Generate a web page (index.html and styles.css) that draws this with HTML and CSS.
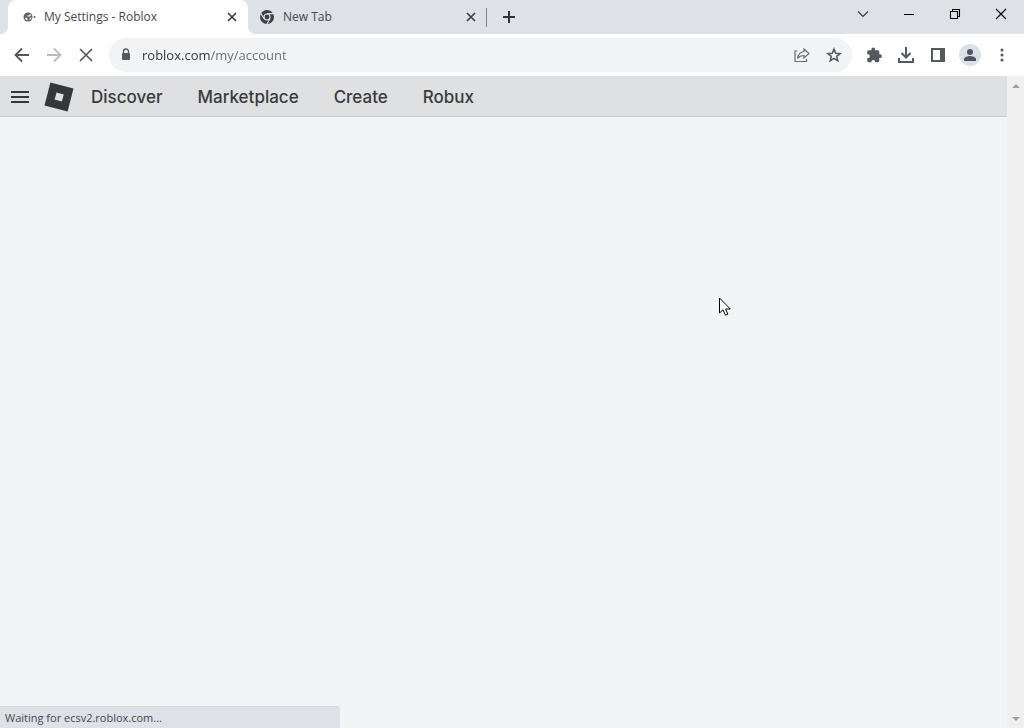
FILE: index.html
```html
<!DOCTYPE html>
<html lang="en">
  <head>
    <meta charset="utf-8">
    <title>My Settings - Roblox</title>
    <link rel="stylesheet" href="styles.css">
  </head>
<body>

<div class="tabstrip">
  <div class="tab active">
    <svg class="favicon" viewBox="0 0 16 16" width="16" height="16">
      <circle cx="6" cy="8" r="4.500" fill="#5f6368"/>
      <path d="M3 8.500l2.500 1v2C4 11 3 10 3 8.500zM5 6.500h2L8 5l1 1.500-1 1H5.500zM7.500 9.500L9.500 8c0 1.500-.8 2.500-2 3z" fill="#fff"/>
      <circle cx="12.500" cy="8" r="1" fill="#5f6368"/>
    </svg>
    <span class="tab-title">My Settings - Roblox</span>
    <button class="tab-close" aria-label="Close tab">
      <svg viewBox="0 0 16 16" width="16" height="16"><path d="M4 4l8 8M12 4l-8 8" stroke="#3c4043" stroke-width="1.7"/></svg>
    </button>
  </div>
  <div class="tab">
    <svg class="favicon" viewBox="0 0 16 16" width="16" height="16">
      <circle cx="8" cy="8" r="7" fill="#3c4043"/>
      <circle cx="8" cy="8" r="3.6" fill="#dee1e6"/>
      <circle cx="8" cy="8" r="2.4" fill="#3c4043"/>
      <path d="M8 4.6h6.6M5 9.8L1.8 4.2M11 9.7l-3.2 5.6" stroke="#dee1e6" stroke-width="1.1"/>
    </svg>
    <span class="tab-title">New Tab</span>
    <button class="tab-close" aria-label="Close tab">
      <svg viewBox="0 0 16 16" width="16" height="16"><path d="M4 4l8 8M12 4l-8 8" stroke="#3c4043" stroke-width="1.7"/></svg>
    </button>
  </div>
  <button class="new-tab" aria-label="New tab">
    <svg viewBox="0 0 16 16" width="16" height="16"><path d="M8 2v12M2 8h12" stroke="#303236" stroke-width="2"/></svg>
  </button>
  <div class="window-buttons">
    <button aria-label="Search tabs">
      <svg viewBox="0 0 16 16" width="16" height="16"><path d="M3 5.5l5 5 5-5" fill="none" stroke="#333" stroke-width="1.1"/></svg>
    </button>
    <button aria-label="Minimize">
      <svg viewBox="0 0 16 16" width="16" height="16"><path d="M3 8.5h10" stroke="#000"/></svg>
    </button>
    <button aria-label="Restore">
      <svg viewBox="0 0 16 16" width="16" height="16"><path d="M3.5 5.5h7v7h-7zM5.500 5.500v-2h7v7h-2" fill="none" stroke="#000" stroke-width="1.1"/></svg>
    </button>
    <button aria-label="Close">
      <svg viewBox="0 0 16 16" width="16" height="16"><path d="M3 3l10 10M13 3L3 13" stroke="#000" stroke-width="1.1"/></svg>
    </button>
  </div>
</div>

<div class="toolbar">
  <button aria-label="Back">
    <svg viewBox="0 0 20 20" width="20" height="20"><path d="M17 10H4M10 3.500L3.500 10l6.500 6.500" fill="none" stroke="#55585c" stroke-width="1.800"/></svg>
  </button>
  <button aria-label="Forward" disabled>
    <svg viewBox="0 0 20 20" width="20" height="20"><path d="M3 10h13M10 3.500l6.500 6.500-6.500 6.500" fill="none" stroke="#b9bbbe" stroke-width="1.800"/></svg>
  </button>
  <button aria-label="Stop">
    <svg viewBox="0 0 20 20" width="20" height="20"><path d="M4 4l12 12M16 4L4 16" stroke="#55585c" stroke-width="1.700"/></svg>
  </button>
  <div class="address">
    <svg class="lock" viewBox="0 0 16 16" width="16" height="16">
      <path d="M5.500 7V4.500a2.500 2.500 0 0 1 5 0V7" fill="none" stroke="#55585c" stroke-width="1.4"/>
      <rect x="4" y="6" width="8" height="7" rx="1" fill="#55585c"/>
    </svg>
    <input class="url" type="text" value="roblox.com/my/account" aria-label="Address">
    <button aria-label="Share">
      <svg viewBox="0 0 18 18" width="18" height="18" fill="none" stroke="#6a6d71" stroke-width="1.200"><path d="M4.500 5H2v10.500h11.500V13"/><path d="M11 3l5 4.500-5 4.500V9.500c-3 0-5 1-6.500 3C5 9 7 6 11 5.500z"/></svg>
    </button>
    <button aria-label="Bookmark this tab">
      <svg viewBox="0 0 18 18" width="18" height="18"><path d="M9 3l1.700 4.200 4.500.3-3.500 2.900 1.100 4.400L9 12.400l-3.800 2.400 1.100-4.400L2.800 7.500l4.500-.3z" fill="none" stroke="#55585c" stroke-width="1.500"/></svg>
    </button>
  </div>
  <button aria-label="Extensions">
    <svg viewBox="0 0 24 24" width="18" height="18"><path d="M20 11h-1V7.500a2 2 0 0 0-2-2h-3.500V4.500a2.500 2.500 0 0 0-5 0v1H5a2 2 0 0 0-2 2V11h1a2.500 2.500 0 0 1 0 5H3v3.500a2 2 0 0 0 2 2h3.500V21a2.500 2.500 0 0 1 5 0v.5H17a2 2 0 0 0 2-2V16h1a2.500 2.500 0 0 0 0-5z" fill="#55585c"/></svg>
  </button>
  <button aria-label="Downloads">
    <svg viewBox="0 0 20 20" width="20" height="20" fill="none" stroke="#55585c" stroke-width="2"><path d="M10 2v10M5.500 8l4.500 4.500L14.500 8M3 13v4h14v-4"/></svg>
  </button>
  <button aria-label="Side panel">
    <svg viewBox="0 0 16 16" width="16" height="16"><path d="M2 2h12v12H2z" fill="none" stroke="#55585c" stroke-width="2"/><path d="M10 2h4v12h-4z" fill="#55585c"/></svg>
  </button>
  <button aria-label="Profile">
    <svg viewBox="0 0 22 22" width="22" height="22"><circle cx="11" cy="11" r="11" fill="#dce1e8"/><circle cx="11" cy="8" r="3" fill="#4d5563"/><path d="M5 17v-2c0-2 4-3 6-3s6 1 6 3v2z" fill="#4d5563"/></svg>
  </button>
  <button aria-label="Menu">
    <svg viewBox="0 0 16 16" width="16" height="16" fill="#55585c"><circle cx="8" cy="3" r="1.500"/><circle cx="8" cy="8" r="1.500"/><circle cx="8" cy="13" r="1.500"/></svg>
  </button>
</div>

<div class="view">
  <div class="page">
    <header class="site-header">
      <button class="menu-icon" aria-label="Navigation">
        <svg viewBox="0 0 18 14" width="18" height="14"><path d="M0 2h18M0 7h18M0 12h18" stroke="#34383b" stroke-width="2"/></svg>
      </button>
      <a class="logo" href="#" aria-label="Roblox">
        <svg viewBox="0 0 30 30" width="30" height="30"><path d="M6.400 0.500L29.500 6.500 23.600 29.500 0.500 23.500zM12.600 10.400L10.600 17.600l7.200 2 2-7.200z" fill="#34383b" fill-rule="evenodd"/></svg>
      </a>
      <nav class="site-nav">
        <a href="#">Discover</a>
        <a href="#">Marketplace</a>
        <a href="#">Create</a>
        <a href="#">Robux</a>
      </nav>
    </header>
  </div>
  <div class="scrollbar">
    <svg viewBox="0 0 8 4" width="8" height="4"><path d="M0 4l4-4 4 4z" fill="#a0a0a0"/></svg>
    <svg viewBox="0 0 8 4" width="8" height="4"><path d="M0 0l4 4 4-4z" fill="#a0a0a0"/></svg>
  </div>
  <div class="status">Waiting for ecsv2.roblox.com...</div>
  <svg class="cursor" viewBox="0 0 12 19" width="12" height="19"><path d="M.5 1v15l3.500-3.200 2.500 5.400 2.400-1.100L6.500 12h4.800z" fill="#fff" stroke="#000"/></svg>
</div>

</body>
</html>
```
FILE: styles.css
```css
body {
  display: flex;
  flex-direction: column;
  min-height: 100vh;
  margin: 0;
  font-family: "Open Sans", "Noto Sans", sans-serif;
  font-size: 12px;
  color: #45484c;
}

button {
  display: flex;
  align-items: center;
  justify-content: center;
  padding: 0;
  border: none;
  background: none;
}

svg {
  display: block;
  flex: none;
}

/* tabs */
.tabstrip {
  display: flex;
  height: 34px;
  padding-left: 8px;
  background: #dee1e6;
}

.tab {
  display: flex;
  align-items: center;
  box-sizing: border-box;
  width: 239px;
  padding: 0 7px 0 11px;
  border-right: 1px solid transparent;
  position: relative;
}

.tab.active {
  width: 240px;
  padding: 0 8px 0 14px;
  border: none;
  border-radius: 8px 8px 0 0;
  background: #fff;
}

/* flared bottom corners of the open tab */
.tab.active::before,
.tab.active::after {
  content: "";
  position: absolute;
  bottom: 0;
  width: 8px;
  height: 8px;
}

.tab.active::before {
  left: -8px;
  background: radial-gradient(circle at 0 0, transparent 8px, #fff 8px);
}

.tab.active::after {
  right: -8px;
  background: radial-gradient(circle at 100% 0, transparent 8px, #fff 8px);
}

.tab:not(.active)::after {
  content: "";
  position: absolute;
  right: -1px;
  top: 8px;
  width: 1px;
  height: 19px;
  background: #808389;
}

.tab-title {
  flex: 1;
  margin-left: 8px;
  line-height: 16px;
}

.active .tab-title {
  margin-left: 6px;
}

.new-tab {
  width: 28px;
  margin-left: 8px;
}

.window-buttons {
  display: flex;
  height: 28px;
  margin-left: auto;
}

.window-buttons button {
  width: 46px;
}

/* toolbar */
.toolbar {
  display: flex;
  align-items: center;
  height: 42px;
  padding: 0 6px;
  background: #fff;
}

.toolbar button {
  width: 32px;
  height: 32px;
}

.address {
  display: flex;
  flex: 1;
  align-items: center;
  height: 34px;
  margin: 0 6px 0 7px;
  padding: 0 2px 0 9px;
  border-radius: 17px;
  background: #f1f3f4;
}

/* host name is darker than the path */
.url {
  flex: 1;
  min-width: 0;
  height: 24px;
  margin-left: 8px;
  padding: 0;
  border: none;
  outline: none;
  font-family: inherit;
  font-size: 13px;
  color: transparent;
  background: linear-gradient(to right, #303236 68px, #6a6d71 68px);
  -webkit-background-clip: text;
  background-clip: text;
}

/* page */
.view {
  display: flex;
  flex: 1;
  position: relative;
}

.page {
  flex: 1;
  background: #f2f4f5;
}

.site-header {
  display: flex;
  align-items: center;
  box-sizing: border-box;
  height: 41px;
  padding: 2px 0 0 11px;
  border-bottom: 1px solid #c8cacc;
  background: #dee0e2;
}

.logo {
  margin: 0 17px 0 15px;
}

.site-nav {
  display: flex;
  gap: 35px;
}

.site-nav a {
  font-family: Inter, sans-serif;
  font-size: 17px;
  font-weight: 500;
  line-height: 24px;
  color: #393b3d;
  text-decoration: none;
}

.scrollbar {
  display: flex;
  flex-direction: column;
  align-items: center;
  justify-content: space-between;
  box-sizing: border-box;
  width: 17px;
  padding: 8px 0 7px;
  background: #f0f0f0;
}

.status {
  position: absolute;
  left: 0;
  bottom: 0;
  box-sizing: border-box;
  width: 340px;
  height: 22px;
  padding-left: 5px;
  border-top: 1px solid #d3d6da;
  border-radius: 0 4px 0 0;
  font-size: 11px;
  line-height: 22px;
  background: #dee1e6;
}

.cursor {
  position: absolute;
  left: 719px;
  top: 221px;
}
```
